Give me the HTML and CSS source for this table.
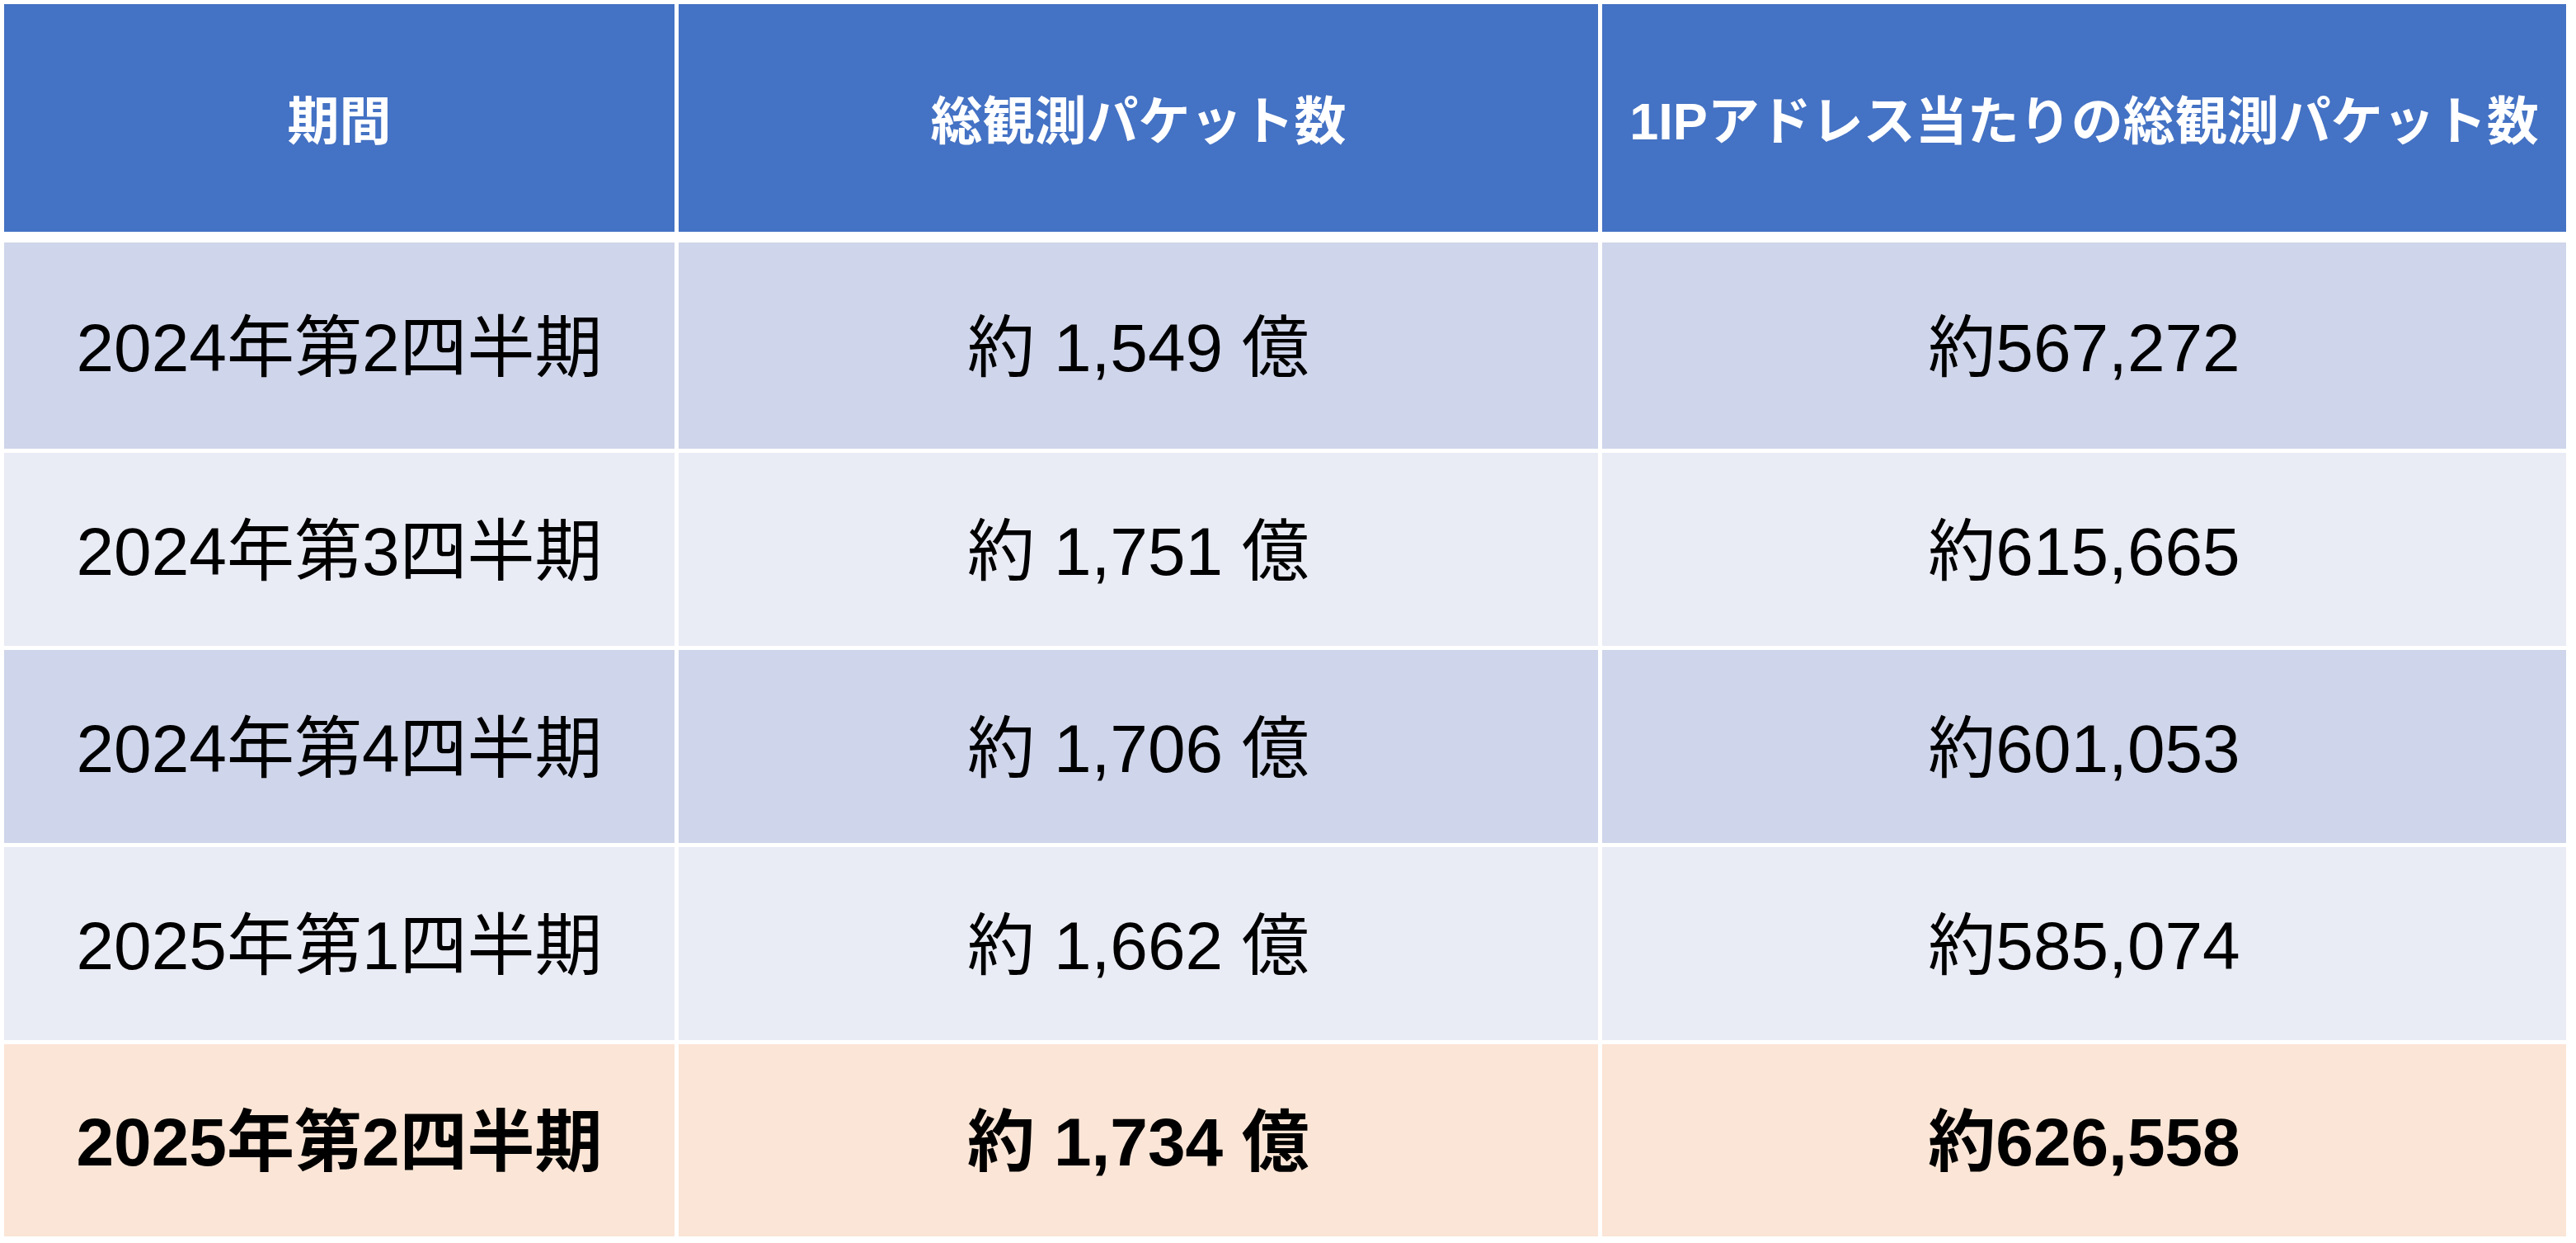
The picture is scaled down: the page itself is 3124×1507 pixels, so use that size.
FILE: index.html
```html
<!DOCTYPE html>
<html lang="ja">
<head>
<meta charset="utf-8">
<title>観測パケット数</title>
<link rel="stylesheet" href="styles.css">
</head>
<body>
<div class="table">
  <div class="cell head">期間</div>
  <div class="cell head">総観測パケット数</div>
  <div class="cell head">1IPアドレス当たりの総観測パケット数</div>

  <div class="cell band1">2024年第2四半期</div>
  <div class="cell band1">約 1,549 億</div>
  <div class="cell band1">約567,272</div>

  <div class="cell band2">2024年第3四半期</div>
  <div class="cell band2">約 1,751 億</div>
  <div class="cell band2">約615,665</div>

  <div class="cell band1">2024年第4四半期</div>
  <div class="cell band1">約 1,706 億</div>
  <div class="cell band1">約601,053</div>

  <div class="cell band2">2025年第1四半期</div>
  <div class="cell band2">約 1,662 億</div>
  <div class="cell band2">約585,074</div>

  <div class="cell highlight">2025年第2四半期</div>
  <div class="cell highlight">約 1,734 億</div>
  <div class="cell highlight">約626,558</div>
</div>
</body>
</html>
```

FILE: styles.css
```css
html, body {
  margin: 0;
  padding: 0;
  background: #ffffff;
}

body {
  padding: 5px 0 0 5px;
  font-family: "Liberation Sans", "Noto Sans CJK JP", sans-serif;
}

.table {
  display: grid;
  grid-template-columns: 813px 1115px 1169px;
  grid-template-rows: 284px 250px 234px 234px 234px 233px;
  column-gap: 5px;
  row-gap: 5px;
}

.cell {
  display: flex;
  align-items: center;
  justify-content: center;
  box-sizing: border-box;
  padding-bottom: 10px;
  font-size: 82px;
  color: #000000;
  white-space: nowrap;
}

.head {
  background: #4472c4;
  color: #ffffff;
  font-weight: bold;
  font-size: 63px;
  margin-bottom: 8px;
  padding-bottom: 4px;
}

.band1 {
  background: #cfd5ea;
}

.band2 {
  background: #e9ebf5;
}

.highlight {
  background: #fbe5d6;
  font-weight: bold;
}
```
